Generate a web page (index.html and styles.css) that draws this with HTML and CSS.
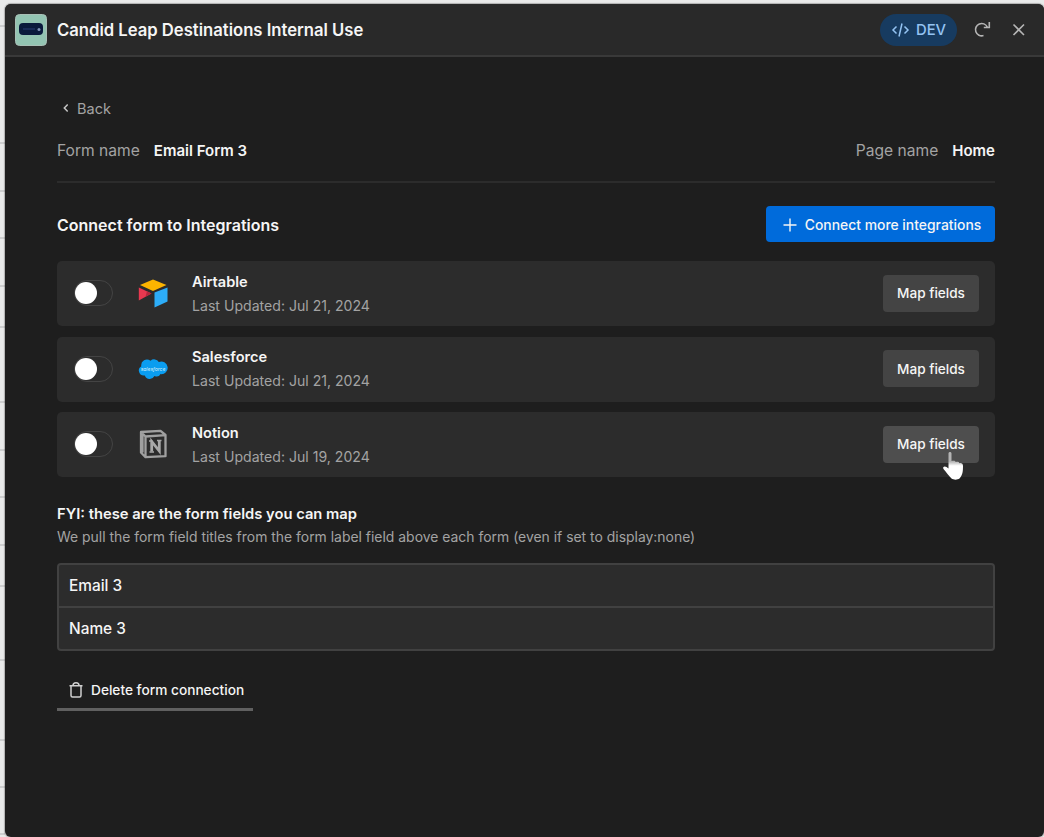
FILE: index.html
```html
<!DOCTYPE html>
<html lang="en">
<head>
    <meta charset="UTF-8">
    <meta name="viewport" content="width=device-width, initial-scale=1.0">
    <title>Candid Leap Destinations Internal Use</title>
    <link rel="stylesheet" href="styles.css">
</head>
<body>
    <svg class="canvas-lines" width="5" height="837" viewBox="0 0 5 837">
        <path d="M0 26h5M0 143h5M0 191h5M0 238h5M0 286h5M0 327h5M0 402h5M0 450h5M0 497h5M0 545h5M0 586h5M0 660h5M0 740h5M0 787h5M0 834h5"/>
    </svg>
    <div class="panel">
        <header class="header">
            <svg class="app-logo" viewBox="0 0 32 32">
                <rect x="0.5" y="0.5" width="31" height="31" rx="4" fill="#93c4b2" stroke="#a9bfb6"/>
                <rect x="4" y="9" width="24" height="12" rx="4" fill="#0a1a3c"/>
                <path d="M8 15h12" stroke="#1f3260" stroke-width="1.5"/>
                <circle cx="24" cy="15.500" r="1.500" fill="#7f93b5"/>
            </svg>
            <h1>Candid Leap Destinations Internal Use</h1>
            <div class="dev-badge">
                <svg width="19" height="16" viewBox="0 0 19 16">
                    <path d="M5.500 4.500 2 8l3.500 3.500M13.500 4.500 17 8l-3.500 3.500M11 1.500 8 14.500"/>
                </svg>
                <span>DEV</span>
            </div>
            <button class="icon-btn">
                <svg width="20" height="20" viewBox="0 0 20 20">
                    <path d="M11.500 15.600A6.200 6.200 0 1 1 15.300 7M17.300 2v5.500h-5.500"/>
                </svg>
            </button>
            <button class="icon-btn">
                <svg width="20" height="20" viewBox="0 0 20 20">
                    <path d="M4.500 4.500l10.500 10.500M15 4.500l-10.500 10.500"/>
                </svg>
            </button>
        </header>

        <main class="content">
            <a class="back" href="#">
                <svg width="6" height="10" viewBox="0 0 6 10"><path d="M4.700 1.500 1.300 5l3.400 3.500"/></svg>
                <span>Back</span>
            </a>

            <div class="info-row">
                <div class="info"><span>Form name</span><strong>Email Form 3</strong></div>
                <div class="info"><span>Page name</span><strong>Home</strong></div>
            </div>

            <div class="section-head">
                <h2>Connect form to Integrations</h2>
                <button class="connect-btn">
                    <svg width="14" height="14" viewBox="0 0 14 14"><path d="M7 .5v13M.5 7h13"/></svg>
                    <span>Connect more integrations</span>
                </button>
            </div>

            <div class="integrations">
                <div class="card">
                    <div class="toggle"></div>
                    <svg class="logo" viewBox="0 0 30 30">
                        <path fill="#fcb400" d="M15 1.500 28.500 7 15 13 2 7z"/>
                        <path fill="#2dadf8" d="M29.500 9.500v14L16.500 29.500V14.500z"/>
                        <path fill="#e8384f" d="M.8 9.500 13.500 15.500.8 22.500z"/>
                        <path fill="#b3263c" d="M9 13.300l4.500 2.200-6 3.300z"/>
                    </svg>
                    <div class="card-text">
                        <h3>Airtable</h3>
                        <p>Last Updated: Jul 21, 2024</p>
                    </div>
                    <button class="map-btn">Map fields</button>
                </div>
                <div class="card">
                    <div class="toggle"></div>
                    <svg class="logo" viewBox="0 0 30 30">
                        <path fill="#0a9df0" d="M12.500 6.800a5.300 5.300 0 0 1 8.300 1.300 6.300 6.300 0 1 1 1.800 12 4.700 4.700 0 0 1-6.100 1.900 5.300 5.300 0 0 1-9.700-.6A5 5 0 0 1 3.300 12.200 5.700 5.700 0 0 1 12.500 6.800z"/>
                        <text class="logo-text" x="15" y="16.500">salesforce</text>
                    </svg>
                    <div class="card-text">
                        <h3>Salesforce</h3>
                        <p>Last Updated: Jul 21, 2024</p>
                    </div>
                    <button class="map-btn">Map fields</button>
                </div>
                <div class="card">
                    <div class="toggle"></div>
                    <svg class="logo" viewBox="0 0 30 30">
                        <path class="notion-box" d="M3 3 22.500 1.800 27.500 6V27.200L7.500 28.200 3 23.500zM3 3 7.500 7.500 27.500 6.200M7.500 7.500v20.500M4.500 5.500v18"/>
                        <path class="notion-n" d="M13.700 22.500V12.500l7.600 9.500V12"/>
                        <path class="notion-serif" d="M11 12h3.500M11.500 23h4.500M19 11.500h4.500"/>
                    </svg>
                    <div class="card-text">
                        <h3>Notion</h3>
                        <p>Last Updated: Jul 19, 2024</p>
                    </div>
                    <button class="map-btn hover">
                        Map fields
                        <svg class="cursor" width="24" height="30" viewBox="0 0 24 30">
                            <defs>
                                <linearGradient id="cursor-fill" x1="0" y1="0" x2="0" y2="1">
                                    <stop offset="0.35" stop-color="#b4b4b4"/>
                                    <stop offset="0.5" stop-color="#fff"/>
                                </linearGradient>
                            </defs>
                            <path fill="url(#cursor-fill)" d="M6.500 2.500C6.500.5 9.500.5 9.500 2.500V10c3-.8 4 0 4.200 1 2-.5 3.300 0 3.600 1.200 2.500-.4 3.700.6 3.700 2.800 0 6-.5 9-3.500 12.500-2 1.500-6 1.500-8 0C6.500 24.500 4.500 21.500 1.500 18c-1.300-2 1-3.500 3-2l2 1.500z"/>
                        </svg>
                    </button>
                </div>
            </div>

            <div class="fields-head">
                <h2>FYI: these are the form fields you can map</h2>
                <p>We pull the form field titles from the form label field above each form (even if set to display:none)</p>
            </div>

            <ul class="fields">
                <li>Email 3</li>
                <li>Name 3</li>
            </ul>

            <button class="delete-btn">
                <svg width="16" height="18" viewBox="0 0 16 18">
                    <path d="M1.500 4.700h13M3 4.700V14.500q0 1.500 1.500 1.500h7q1.500 0 1.500-1.500V4.700M5 4.500C5 .8 11 .8 11 4.500"/>
                </svg>
                <span>Delete form connection</span>
            </button>
        </main>
    </div>
</body>
</html>
```

FILE: styles.css
```css
:root {
    --bg: #1e1e1e;
    --header: #292929;
    --card: #2c2c2c;
    --border: #414141;
    --text: #f5f5f5;
    --muted: #a3a3a3;
    --blue: #006bdb;
}

* {
    margin: 0;
    padding: 0;
    box-sizing: border-box;
}

body {
    height: 837px;
    padding: 4px 0 0 5px;
    overflow: hidden;
    background: #e9eaea;
    color: var(--text);
    font-family: 'Inter', sans-serif;
    font-size: 15px;
}

svg {
    display: block;
    flex-shrink: 0;
    fill: none;
}

button {
    border: none;
    background: none;
    color: inherit;
    font: inherit;
    cursor: pointer;
}

/* Page lines showing behind the panel */
.canvas-lines {
    position: absolute;
    top: 0;
    left: 0;
    stroke: #c4c5c6;
    stroke-width: 1.5;
}

.panel {
    position: relative;
    height: 833px;
    background: var(--bg);
    border-radius: 6px;
    box-shadow: 0 0 1px 1px rgba(0,0,0,0.25);
    overflow: hidden;
}

.header {
    display: flex;
    align-items: center;
    height: 53px;
    padding: 0 15px 0 10px;
    background: var(--header);
    border-bottom: 2px solid #393939;
}

.app-logo {
    width: 32px;
    height: 32px;
    margin-right: 10px;
}

.header h1 {
    flex: 1;
    font-size: 16.65px;
    font-weight: 600;
    white-space: nowrap;
}

.dev-badge {
    display: flex;
    align-items: center;
    justify-content: center;
    gap: 6px;
    width: 77px;
    height: 32px;
    margin-right: 15px;
    border-radius: 16px;
    background: #173b60;
    color: #94c3f2;
    font-size: 14.8px;
    font-weight: 500;
}

.dev-badge svg {
    stroke: currentColor;
    stroke-width: 1.5;
}

.icon-btn + .icon-btn {
    margin-left: 17px;
}

.icon-btn svg {
    stroke: #b5b5b5;
    stroke-width: 1.6;
}

.content {
    padding: 41px 49px 0 52px;
}

.back {
    display: flex;
    align-items: center;
    gap: 8px;
    height: 20px;
    padding-left: 6px;
    color: var(--muted);
    font-size: 14.5px;
    text-decoration: none;
}

.back svg {
    stroke: #c4c4c4;
    stroke-width: 1.5;
}

.info-row {
    display: flex;
    justify-content: space-between;
    height: 65px;
    padding-top: 22px;
    border-bottom: 2px solid #2c2c2c;
}

.info {
    display: flex;
    gap: 14px;
    height: 20px;
    line-height: 21px;
}

.info span {
    color: var(--muted);
    font-size: 15.6px;
}

.info strong {
    font-weight: 600;
}

.section-head {
    display: flex;
    align-items: center;
    justify-content: space-between;
    height: 36px;
    margin: 23px 0 19px;
}

h2,
h3 {
    font-weight: 600;
    white-space: nowrap;
}

.section-head h2 {
    padding-top: 1px;
    font-size: 16px;
}

h3 {
    font-size: 14.6px;
}

.connect-btn {
    display: flex;
    align-items: center;
    justify-content: center;
    gap: 8px;
    width: 229px;
    height: 36px;
    padding: 1px 0 0 3px;
    border-radius: 4px;
    background: var(--blue);
    font-size: 13.9px;
    font-weight: 500;
    white-space: nowrap;
}

.connect-btn svg {
    stroke: currentColor;
    stroke-width: 1.4;
}

.integrations {
    display: flex;
    flex-direction: column;
    gap: 10.5px;
}

.card {
    display: flex;
    align-items: center;
    height: 65px;
    padding: 0 16px 1px 17px;
    border-radius: 5px;
    background: var(--card);
}

.toggle {
    width: 39px;
    height: 26px;
    border: 1.5px solid #444;
    border-radius: 13px;
}

.toggle::before {
    content: '';
    display: block;
    width: 22px;
    height: 22px;
    margin: 1px 0 0 0;
    border-radius: 50%;
    background: #fff;
}

.logo {
    width: 30px;
    height: 30px;
    margin: 0 24px 0 25px;
}

.logo-text {
    fill: #d8effa;
    font-size: 5px;
    font-style: italic;
    text-anchor: middle;
}

.notion-box {
    stroke: #a0a0a0;
    stroke-width: 2.3;
    stroke-linejoin: round;
}

.notion-n {
    stroke: #a8a8a8;
    stroke-width: 2.8;
}

.notion-serif {
    stroke: #a8a8a8;
    stroke-width: 1.6;
}

.card-text {
    flex: 1;
    padding-top: 1px;
    line-height: 23px;
}

.card-text p {
    color: var(--muted);
    font-size: 14.1px;
}

.map-btn {
    position: relative;
    width: 96px;
    height: 37px;
    border-radius: 4px;
    background: #444;
    font-size: 13.6px;
    font-weight: 500;
}

.map-btn.hover {
    background: #4e4e4e;
}

.cursor {
    position: absolute;
    left: 59px;
    top: 25px;
}

.fields-head {
    padding-top: 26px;
    line-height: 23px;
}

.fields-head h2 {
    font-size: 14.75px;
}

.fields-head p {
    color: var(--muted);
    font-size: 13.93px;
    white-space: nowrap;
}

.fields {
    margin-top: 14px;
    list-style: none;
    border: 2px solid var(--border);
    border-radius: 4px;
    background: var(--card);
}

.fields li {
    height: 41px;
    padding-left: 10px;
    font-size: 15.4px;
    font-weight: 500;
    line-height: 41px;
}

.fields li + li {
    height: 43px;
    border-top: 2px solid var(--border);
}

.delete-btn {
    display: flex;
    align-items: center;
    gap: 7px;
    width: 196px;
    height: 41px;
    margin-top: 19px;
    padding: 2px 0 0 11px;
    border-bottom: 3px solid #606060;
    font-size: 13.7px;
    font-weight: 500;
    white-space: nowrap;
}

.delete-btn svg {
    stroke: #d0d0d0;
    stroke-width: 1.5;
}
```
